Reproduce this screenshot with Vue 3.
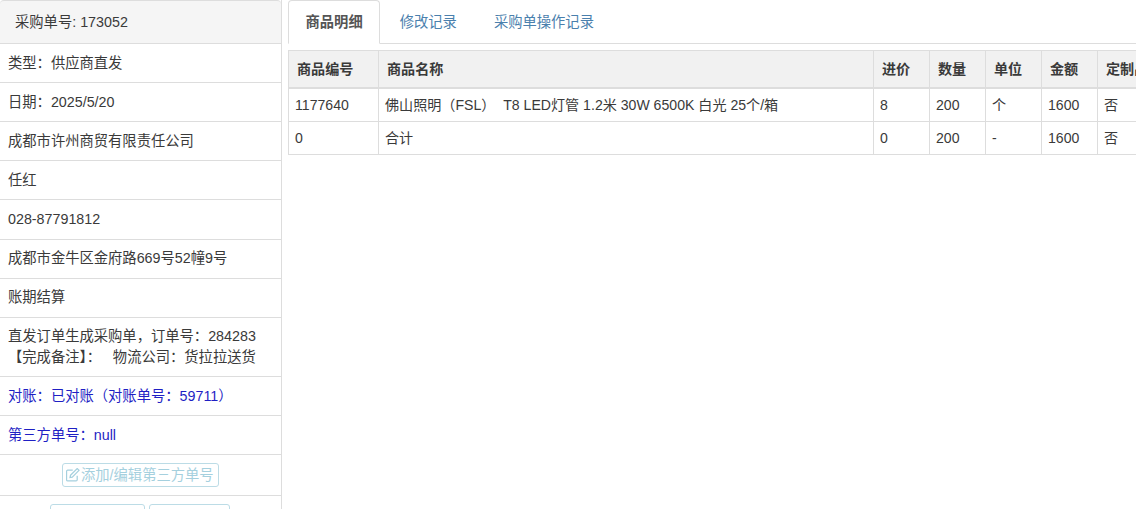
<script setup>
const rows = [
  { text: '类型：供应商直发' },
  { text: '日期：2025/5/20' },
  { text: '成都市许州商贸有限责任公司' },
  { text: '任红' },
  { text: '028-87791812' },
  { text: '成都市金牛区金府路669号52幢9号' },
  { text: '账期结算' },
  { text: '直发订单生成采购单，订单号：284283\n【完成备注】：   物流公司：货拉拉送货' },
  { text: '对账：已对账（对账单号：59711）', blue: true },
  { text: '第三方单号：null', blue: true },
]
const tabs = ['商品明细', '修改记录', '采购单操作记录']
const heads = ['商品编号', '商品名称', '进价', '数量', '单位', '金额', '定制品']
const items = [
  ['1177640', '佛山照明（FSL）  T8 LED灯管 1.2米 30W 6500K 白光 25个/箱', '8', '200', '个', '1600', '否'],
  ['0', '合计', '0', '200', '-', '1600', '否'],
]
</script>

<template>
  <div class="page">
    <aside class="side">
      <div class="side-head">采购单号: 173052</div>
      <div v-for="row in rows" :key="row.text" class="side-row" :class="{ blue: row.blue }">{{ row.text }}</div>
      <div class="side-row center">
        <button class="btn" disabled>
          <svg class="ico" viewBox="1 1 12.5 12.5" fill="none" stroke="currentColor" stroke-width="1.1">
            <path d="M11 8v3.5a1 1 0 0 1-1 1H2.5a1 1 0 0 1-1-1V4a1 1 0 0 1 1-1H7" />
            <path d="M5 7.5 11 1.5l1.6 1.6-6 6-2 .4z" />
          </svg>添加/编辑第三方单号
        </button>
      </div>
      <div class="side-row two">
        <button class="btn up wide" disabled>
          <svg class="ico" viewBox="0 0 14 14" fill="currentColor"><path d="M7 1 3 5h8zM5.5 5h3v5h-3z" /></svg>
        </button>
        <button class="btn up narrow" disabled>
          <svg class="ico" viewBox="0 0 14 14" fill="currentColor"><path d="M7 1 3 5h8zM5.5 5h3v5h-3z" /></svg>
        </button>
      </div>
    </aside>
    <main class="main">
      <nav class="tabs">
        <a v-for="(t, i) in tabs" :key="t" class="tab" :class="{ active: i === 0 }">{{ t }}</a>
      </nav>
      <table class="grid">
        <colgroup>
          <col style="width: 90px" />
          <col style="width: 495px" />
          <col style="width: 56px" />
          <col style="width: 56px" />
          <col style="width: 56px" />
          <col style="width: 56px" />
          <col style="width: 56px" />
        </colgroup>
        <thead>
          <tr><th v-for="h in heads" :key="h">{{ h }}</th></tr>
        </thead>
        <tbody>
          <tr v-for="item in items" :key="item[1]">
            <td v-for="(c, i) in item" :key="i">{{ c }}</td>
          </tr>
        </tbody>
      </table>
    </main>
  </div>
</template>

<style>
html, body {
  margin: 0;
  overflow: hidden;
  background: #fff;
}
</style>

<style scoped>
.page {
  display: flex;
  height: 509px;
  overflow: hidden;
  font-family: "Liberation Sans", "Noto Sans CJK SC", sans-serif;
  font-size: 14px;
  line-height: 20px;
  color: #3a3a3a;
}
.side {
  width: 281px;
  flex: none;
  border-right: 1px solid #ddd;
  font-size: 14.3px;
  line-height: 20.14px;
}
.side-head {
  height: 43.9px;
  box-sizing: border-box;
  padding: 11px 15px 0;
  background: #f5f5f5;
  border-bottom: 1px solid #ddd;
  border-top: 1px solid #ddd;
  border-radius: 4px 4px 0 0;
}
.side-row {
  padding: 8.61px 8px 9.39px;
  border-bottom: 1px solid #ddd;
  white-space: pre-wrap;
}
.blue {
  color: #1f1fc4;
}
.center {
  text-align: center;
  padding: 8px 0;
}
.two {
  display: flex;
  gap: 4px;
  padding: 8px 0 0 50px;
  border-bottom: none;
}
.btn {
  font: inherit;
  color: #a5d0de;
  background: #fff;
  border: 1px solid #bcdce6;
  border-radius: 3px;
  padding: 0 3px;
  width: 157px;
  height: 24px;
  display: inline-flex;
  align-items: center;
  white-space: nowrap;
}
.btn.up {
  height: 28px;
  align-items: flex-start;
  padding: 3px 0 0 9px;
}
.btn.wide {
  width: 95px;
}
.btn.narrow {
  width: 81px;
  padding-left: 8px;
}
.ico {
  width: 14px;
  height: 14px;
  margin-right: 1px;
  flex: none;
}
.main {
  flex: 1;
  min-width: 0;
  padding-left: 6px;
}
.tabs {
  display: flex;
  height: 44px;
  box-sizing: border-box;
  border-bottom: 1px solid #ddd;
  margin-bottom: 6px;
  font-size: 14.3px;
}
.tab {
  padding: 11px 16.5px 0;
  margin-right: 2px;
  color: #4a80ad;
  height: 44px;
  box-sizing: border-box;
  border: 1px solid transparent;
  border-radius: 4px 4px 0 0;
}
.tab.active {
  color: #555;
  font-weight: 700;
  background: #fff;
  border-color: #ddd #ddd #fff;
}
.grid {
  table-layout: fixed;
  width: 865px;
  border-collapse: collapse;
  font-size: 14.1px;
}
th, td {
  border: 1px solid #ddd;
  text-align: left;
  overflow: hidden;
  white-space: pre;
}
th {
  background: #f1f1f1;
  height: 36px;
  padding: 0 8px;
  border-bottom-width: 2px;
  font-weight: 700;
}
td {
  height: 32px;
  padding: 0 6px;
}
</style>
